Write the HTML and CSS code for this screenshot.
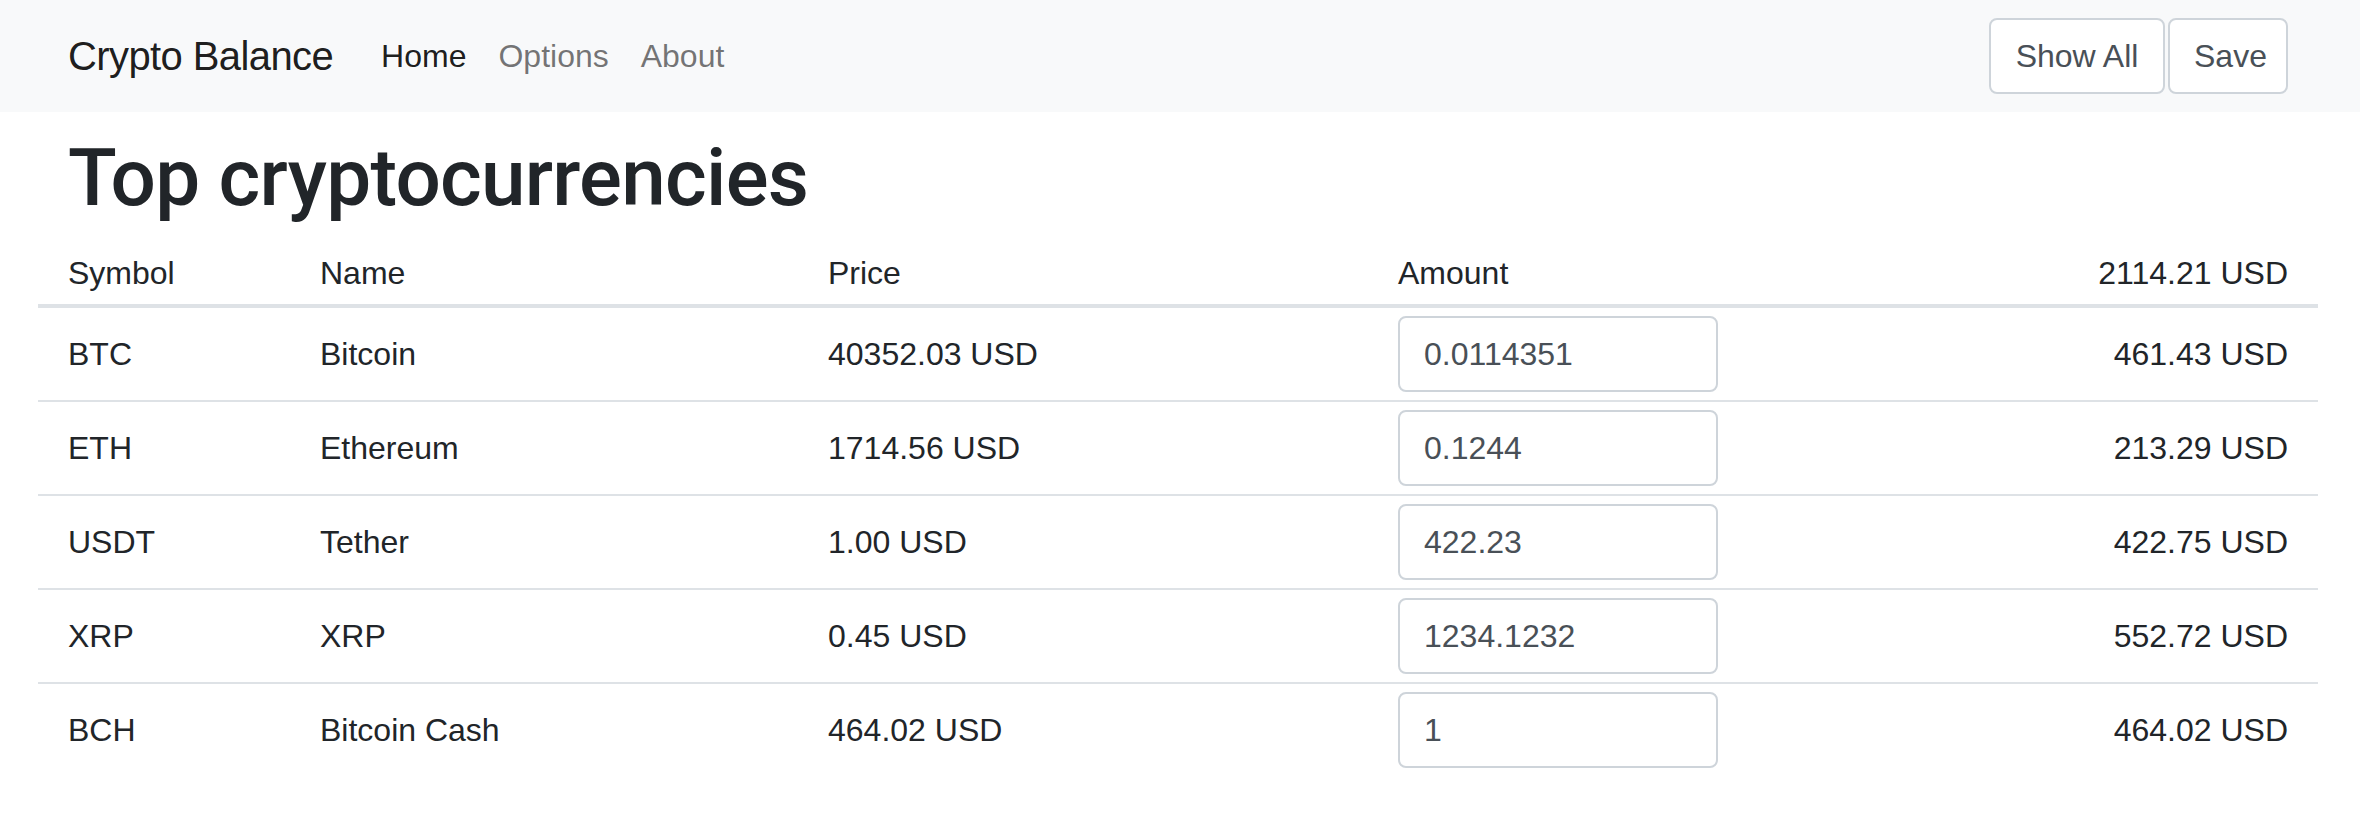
FILE: index.html
```html
<!DOCTYPE html>
<html lang="en">
<head>
<meta charset="utf-8">
<title>Crypto Balance</title>
<link rel="stylesheet" href="styles.css">
</head>
<body>
<nav class="navbar">
  <div class="nav-inner">
    <a class="brand" href="#">Crypto Balance</a>
    <ul class="nav-links">
      <li><a class="nav-link active" href="#">Home</a></li>
      <li><a class="nav-link" href="#">Options</a></li>
      <li><a class="nav-link" href="#">About</a></li>
    </ul>
    <div class="nav-actions">
      <button class="btn btn-show">Show All</button>
      <button class="btn btn-save">Save</button>
    </div>
  </div>
</nav>
<main class="main">
  <h1 class="title">Top cryptocurrencies</h1>
  <table class="coins">
    <colgroup>
      <col class="c-sym"><col class="c-name"><col class="c-price"><col class="c-amount"><col class="c-total">
    </colgroup>
    <thead>
      <tr>
        <th>Symbol</th>
        <th>Name</th>
        <th>Price</th>
        <th>Amount</th>
        <th class="right">2114.21 USD</th>
      </tr>
    </thead>
    <tbody>
      <tr>
        <td>BTC</td><td>Bitcoin</td><td>40352.03 USD</td>
        <td><input class="amount" type="text" value="0.0114351"></td>
        <td class="right">461.43 USD</td>
      </tr>
      <tr>
        <td>ETH</td><td>Ethereum</td><td>1714.56 USD</td>
        <td><input class="amount" type="text" value="0.1244"></td>
        <td class="right">213.29 USD</td>
      </tr>
      <tr>
        <td>USDT</td><td>Tether</td><td>1.00 USD</td>
        <td><input class="amount" type="text" value="422.23"></td>
        <td class="right">422.75 USD</td>
      </tr>
      <tr>
        <td>XRP</td><td>XRP</td><td>0.45 USD</td>
        <td><input class="amount" type="text" value="1234.1232"></td>
        <td class="right">552.72 USD</td>
      </tr>
      <tr>
        <td>BCH</td><td>Bitcoin Cash</td><td>464.02 USD</td>
        <td><input class="amount" type="text" value="1"></td>
        <td class="right">464.02 USD</td>
      </tr>
    </tbody>
  </table>
</main>
</body>
</html>
```
FILE: styles.css
```css
* { box-sizing: border-box; }

html, body {
  margin: 0;
  padding: 0;
  background: #ffffff;
}

body {
  font-family: "Liberation Sans", Arial, sans-serif;
  font-size: 32px;
  line-height: 48px;
  color: #212529;
}

.navbar {
  background: #f8f9fa;
  height: 112px;
  padding: 18px 0;
}

.nav-inner {
  margin: 0 72px 0 68px;
  height: 76px;
  display: flex;
  align-items: center;
}

.brand {
  font-size: 40px;
  line-height: 60px;
  letter-spacing: -0.6px;
  color: rgba(0, 0, 0, 0.9);
  text-decoration: none;
  margin-right: 32px;
}

.nav-links {
  list-style: none;
  margin: 0;
  padding: 0;
  display: flex;
}

.nav-link {
  display: block;
  padding: 0 16px;
  color: rgba(0, 0, 0, 0.55);
  text-decoration: none;
}

.nav-link.active {
  color: rgba(0, 0, 0, 0.9);
}

.nav-actions {
  margin-left: auto;
  display: flex;
  gap: 3px;
}

.btn {
  font-family: inherit;
  font-size: 32px;
  line-height: 48px;
  height: 76px;
  padding: 0 24px;
  color: #495057;
  background: #ffffff;
  border: 2px solid #ced4da;
  border-radius: 8px;
}

.btn-show { width: 176px; }
.btn-save { width: 120px; }

.main {
  padding: 18px 42px 0 38px;
}

.title {
  margin: 0 0 0 30px;
  font-family: Roboto, "Liberation Sans", Arial, sans-serif;
  font-size: 80px;
  line-height: 96px;
  font-weight: 500;
  letter-spacing: -0.75px;
  color: #212529;
}

.coins {
  width: 2280px;
  border-collapse: separate;
  border-spacing: 0;
  table-layout: fixed;
}

.c-sym { width: 252px; }
.c-name { width: 508px; }
.c-price { width: 570px; }
.c-amount { width: 420px; }

.coins th {
  font-weight: 400;
  text-align: left;
  height: 82px;
  padding: 0 30px 7px;
  vertical-align: bottom;
  border-bottom: 4px solid #dee2e6;
}

.coins td {
  padding: 8px 30px;
  height: 94px;
  vertical-align: middle;
  border-bottom: 2px solid #dee2e6;
}

.coins tbody tr:last-child td {
  border-bottom: none;
  height: 92px;
}

.coins .right {
  text-align: right;
}

.amount {
  display: block;
  width: 320px;
  height: 76px;
  padding: 0 24px;
  font-family: inherit;
  font-size: 32px;
  color: #495057;
  background: #ffffff;
  border: 2px solid #ced4da;
  border-radius: 8px;
  outline: none;
}
```
